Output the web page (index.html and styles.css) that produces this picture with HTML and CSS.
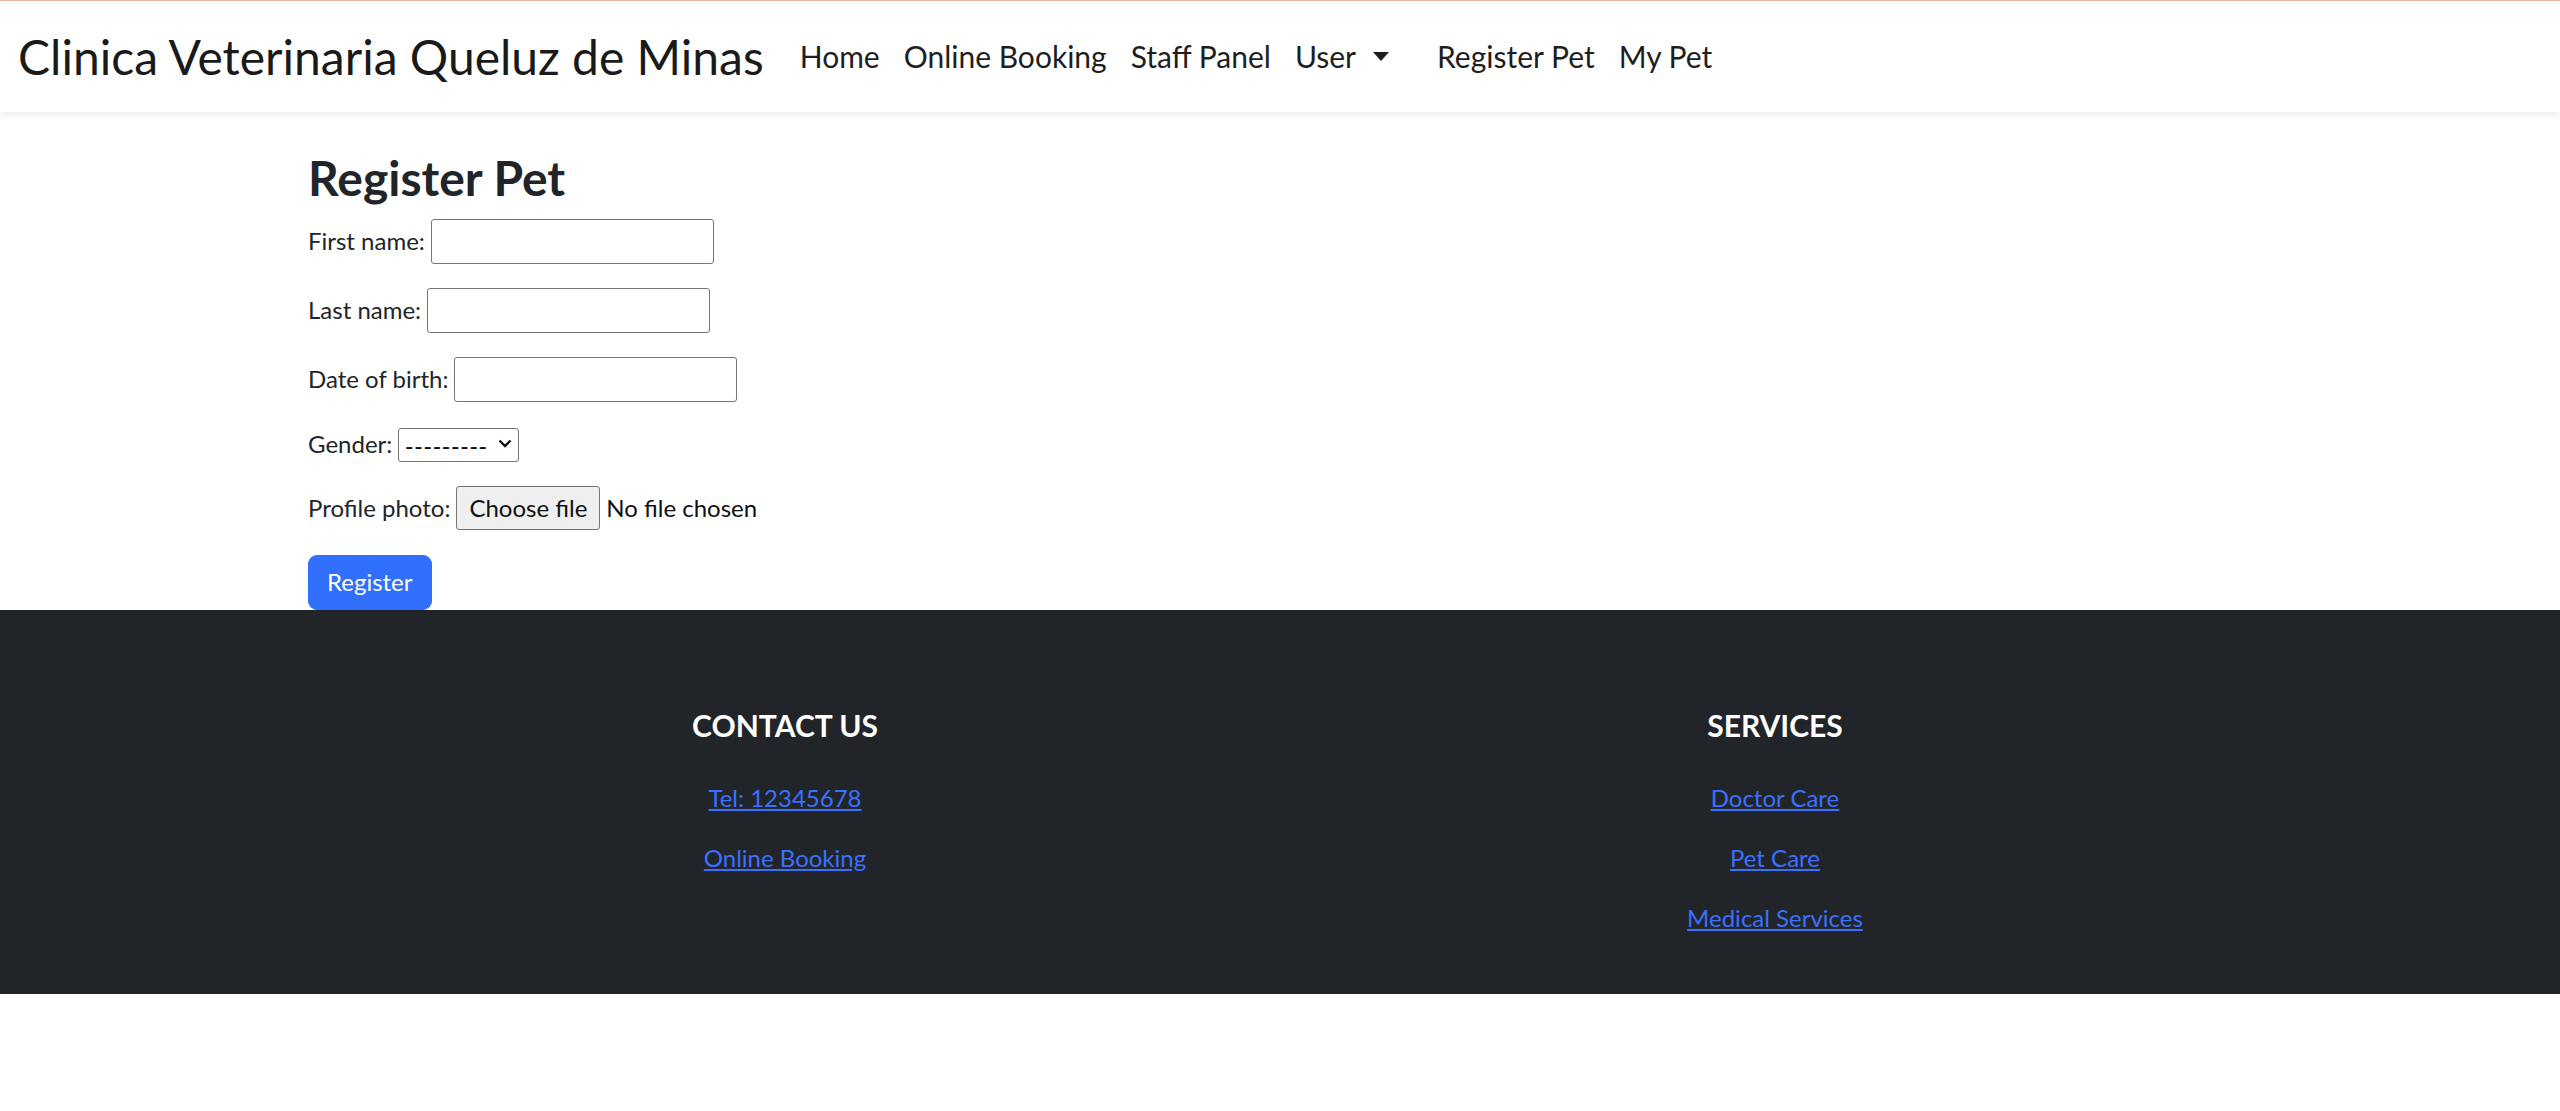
FILE: index.html
```html
<!DOCTYPE html>
<html lang="en">
<head>
<meta charset="utf-8">
<title>Register Pet</title>
<link rel="stylesheet" href="styles.css">
</head>
<body>
<nav class="navbar">
  <div class="nav-inner">
    <a class="brand" href="#">Clinica Veterinaria Queluz de Minas</a>
    <ul class="nav-list">
      <li><a class="nav-link" href="#">Home</a></li>
      <li><a class="nav-link" href="#">Online Booking</a></li>
      <li><a class="nav-link" href="#">Staff Panel</a></li>
      <li><a class="nav-link dropdown-toggle" href="#">User</a></li>
    </ul>
    <ul class="nav-list nav-list-second">
      <li><a class="nav-link" href="#">Register Pet</a></li>
      <li><a class="nav-link" href="#">My Pet</a></li>
    </ul>
  </div>
</nav>

<main class="container main">
  <h2 class="page-title">Register Pet</h2>
  <form class="pet-form">
    <p class="form-row"><label for="first">First name:</label> <input class="text-input" type="text" id="first"></p>
    <p class="form-row"><label for="last">Last name:</label> <input class="text-input" type="text" id="last"></p>
    <p class="form-row"><label for="dob">Date of birth:</label> <input class="text-input" type="text" id="dob"></p>
    <p class="form-row form-row-short"><label for="gender">Gender:</label>
      <span class="select-wrap">
        <select class="select-input" id="gender"><option>---------</option></select>
        <svg class="select-chevron" width="14" height="9" viewBox="0 0 14 9"><path d="M1.5 1.5 L7 7 L12.5 1.5" fill="none" stroke="#111" stroke-width="2.4"/></svg>
      </span>
    </p>
    <p class="form-row"><label for="photo">Profile photo:</label>
      <span class="file-wrap"><span class="file-btn">Choose file</span><span class="file-text">No file chosen</span></span>
    </p>
    <button class="btn-primary" type="button">Register</button>
  </form>
</main>

<footer class="footer">
  <div class="footer-row">
    <div class="footer-col">
      <h5 class="footer-title">CONTACT US</h5>
      <p class="footer-item"><a href="#">Tel: 12345678</a></p>
      <p class="footer-item"><a href="#">Online Booking</a></p>
    </div>
    <div class="footer-col">
      <h5 class="footer-title">SERVICES</h5>
      <p class="footer-item"><a href="#">Doctor Care</a></p>
      <p class="footer-item"><a href="#">Pet Care</a></p>
      <p class="footer-item"><a href="#">Medical Services</a></p>
    </div>
  </div>
</footer>
</body>
</html>
```

FILE: styles.css
```css
* { box-sizing: border-box; }

html, body {
  margin: 0;
  padding: 0;
}

body {
  font-family: "Lato", "Open Sans", sans-serif;
  font-size: 24px;
  line-height: 1.5;
  color: #212529;
  background: #fff;
}

/* Navbar */
.navbar {
  border-top: 1px solid #efb4a8;
  height: 112px;
  background: #fff;
  box-shadow: 0 3px 8px rgba(0, 0, 0, 0.08);
  position: relative;
  z-index: 1;
}

.nav-inner {
  height: 100%;
  display: flex;
  align-items: center;
  padding: 0 18px;
}

.brand {
  font-size: 48px;
  line-height: 1.5;
  color: #1a1a1a;
  text-decoration: none;
  margin-right: 24px;
  white-space: nowrap;
}

.nav-list {
  list-style: none;
  margin: 0;
  padding: 0;
  display: flex;
  align-items: center;
}

.nav-list-second {
  margin-left: 24px;
}

.nav-link {
  display: block;
  padding: 12px 12px;
  font-size: 30px;
  line-height: 1.5;
  color: #1e1e1e;
  text-decoration: none;
  white-space: nowrap;
}

.dropdown-toggle::after {
  content: "";
  display: inline-block;
  margin-left: 17px;
  vertical-align: 7px;
  border-top: 9px solid #1e1e1e;
  border-left: 8.5px solid transparent;
  border-right: 8.5px solid transparent;
}

/* Main */
.container {
  width: 1980px;
  margin-left: auto;
  margin-right: auto;
  padding: 0 18px;
}

.main {
  padding-top: 37px;
}

.page-title {
  margin: 0 0 12px;
  font-size: 48px;
  font-weight: 700;
  line-height: 1.2;
  color: #212529;
}

.pet-form {
  margin: 0;
}

.form-row {
  display: flex;
  align-items: center;
  margin: 0 0 24px;
  min-height: 45px;
}

.form-row label {
  margin-right: 6px;
}

.form-row-short {
  min-height: 36px;
}

.text-input {
  width: 283px;
  height: 45px;
  font: inherit;
  line-height: 36px;
  padding: 3px 3px;
  border: 1.5px solid #767676;
  border-radius: 3px;
  background: #fff;
  margin: 0;
}

.select-wrap {
  position: relative;
  display: inline-block;
  width: 121px;
  height: 34px;
}

.select-input {
  appearance: none;
  -webkit-appearance: none;
  width: 121px;
  height: 34px;
  margin: 0;
  padding: 0 0 0 6px;
  font-family: "Liberation Sans", "Lato", sans-serif;
  font-size: 24px;
  letter-spacing: 1.2px;
  line-height: 31px;
  color: #111;
  border: 1.5px solid #767676;
  border-radius: 3px;
  background: #fff;
}

.select-chevron {
  position: absolute;
  right: 7px;
  top: 12px;
  pointer-events: none;
}

.file-wrap {
  display: inline-flex;
  align-items: center;
}

.file-btn {
  display: inline-block;
  height: 44px;
  padding: 2.5px 12px;
  line-height: 36px;
  border: 1.5px solid #767676;
  border-radius: 3px;
  background: #efefef;
  color: #111;
  margin-right: 6px;
}

.file-text {
  color: #111;
}

.btn-primary {
  display: inline-block;
  font: inherit;
  line-height: 36px;
  padding: 8.5px 18px;
  color: #fff;
  background: #316ffd;
  border: 1.5px solid #316ffd;
  border-radius: 9px;
  margin: 0;
  cursor: pointer;
  vertical-align: top;
}

/* Footer */
.footer {
  background: #212529;
  color: #fff;
  padding: 97px 0 34px;
}

.footer-row {
  display: flex;
  width: 1980px;
  margin: 0 auto;
}

.footer-col {
  flex: 1 1 0;
  text-align: center;
  padding: 0 18px;
}

.footer-title {
  margin: 0 0 37px;
  font-size: 30px;
  font-weight: 700;
  line-height: 1.2;
  color: #fff;
}

.footer-item {
  margin: 0 0 24px;
}

.footer-item a {
  color: #3a70ff;
  text-decoration: underline;
}
```
